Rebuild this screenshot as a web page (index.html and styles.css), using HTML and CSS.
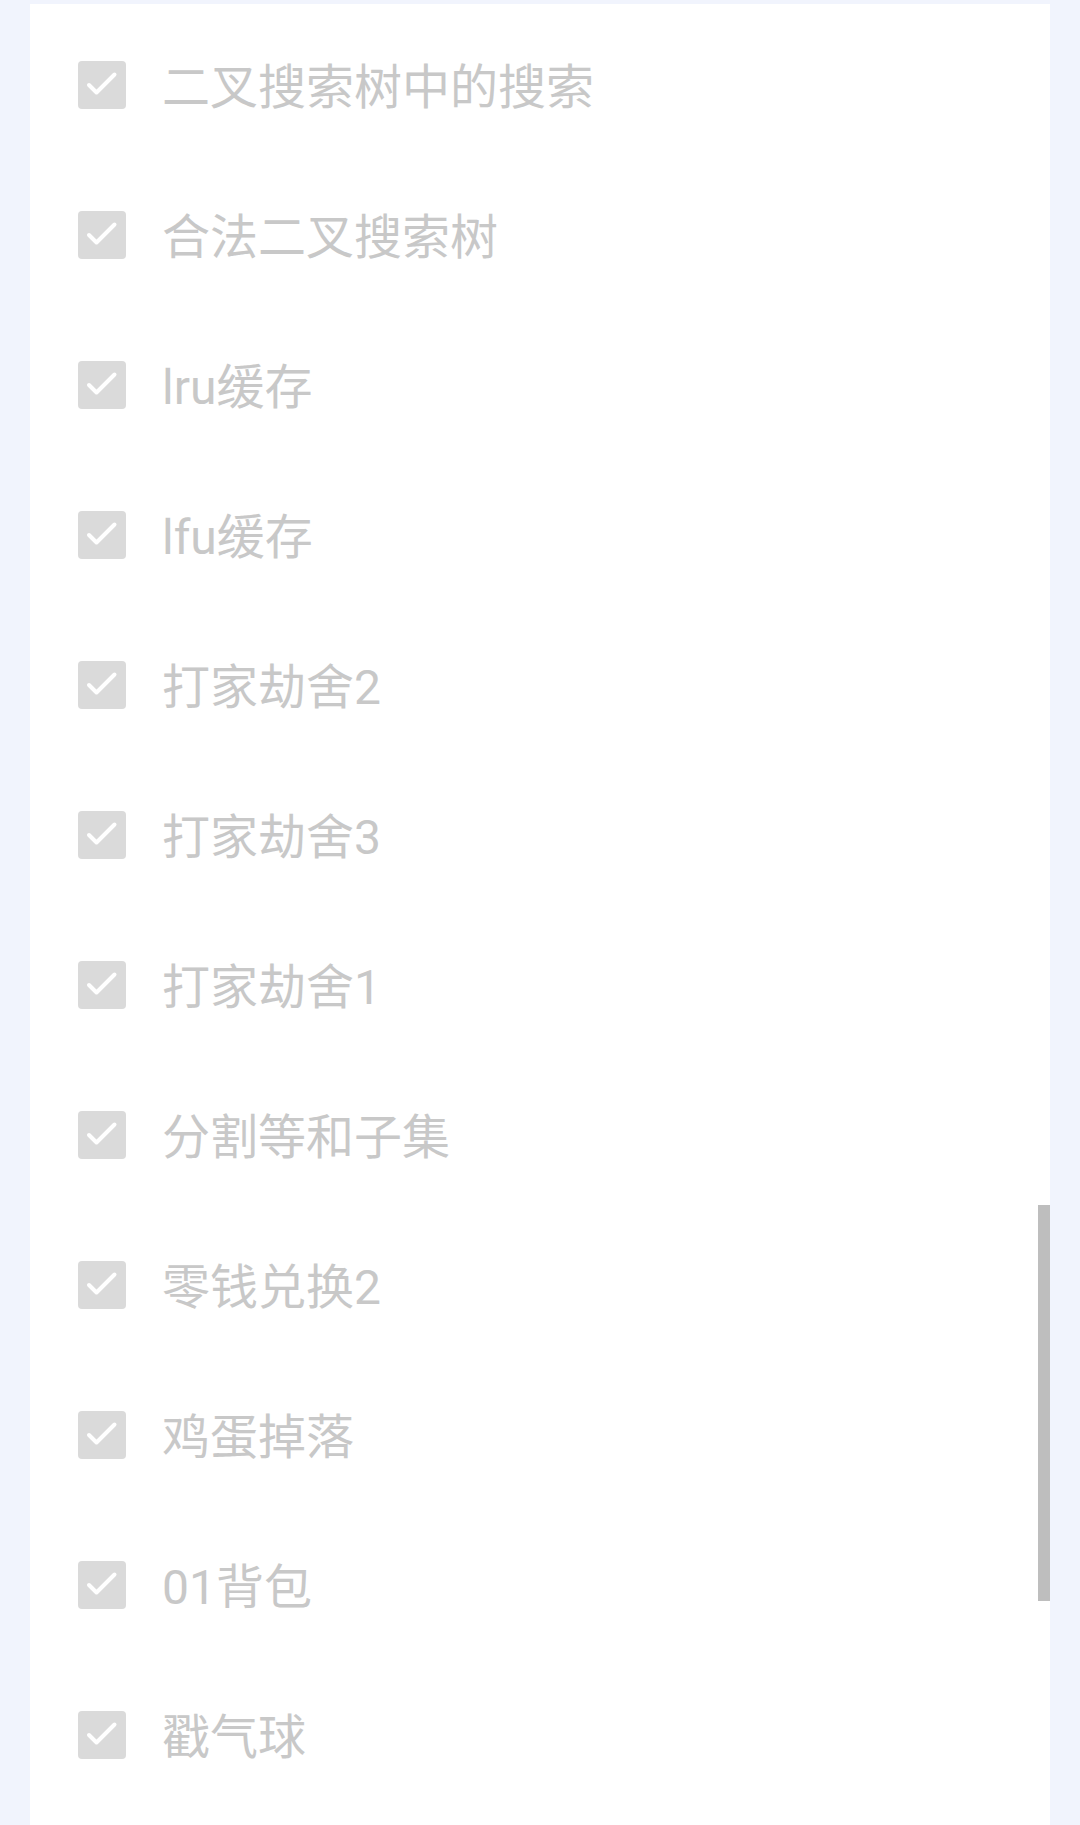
FILE: index.html
```html
<!DOCTYPE html>
<html lang="zh-CN">
<head>
<meta charset="utf-8">
<title>列表</title>
<link rel="stylesheet" href="styles.css">
</head>
<body>
<main class="card">
  <ul class="list">
    <li class="item"><span class="box"><svg viewBox="0 0 48 48"><path d="M11 24 L18.5 31.5 L36.5 13.5"/></svg></span><span class="label">二叉搜索树中的搜索</span></li>
    <li class="item"><span class="box"><svg viewBox="0 0 48 48"><path d="M11 24 L18.5 31.5 L36.5 13.5"/></svg></span><span class="label">合法二叉搜索树</span></li>
    <li class="item"><span class="box"><svg viewBox="0 0 48 48"><path d="M11 24 L18.5 31.5 L36.5 13.5"/></svg></span><span class="label">lru缓存</span></li>
    <li class="item"><span class="box"><svg viewBox="0 0 48 48"><path d="M11 24 L18.5 31.5 L36.5 13.5"/></svg></span><span class="label">lfu缓存</span></li>
    <li class="item"><span class="box"><svg viewBox="0 0 48 48"><path d="M11 24 L18.5 31.5 L36.5 13.5"/></svg></span><span class="label">打家劫舍2</span></li>
    <li class="item"><span class="box"><svg viewBox="0 0 48 48"><path d="M11 24 L18.5 31.5 L36.5 13.5"/></svg></span><span class="label">打家劫舍3</span></li>
    <li class="item"><span class="box"><svg viewBox="0 0 48 48"><path d="M11 24 L18.5 31.5 L36.5 13.5"/></svg></span><span class="label">打家劫舍1</span></li>
    <li class="item"><span class="box"><svg viewBox="0 0 48 48"><path d="M11 24 L18.5 31.5 L36.5 13.5"/></svg></span><span class="label">分割等和子集</span></li>
    <li class="item"><span class="box"><svg viewBox="0 0 48 48"><path d="M11 24 L18.5 31.5 L36.5 13.5"/></svg></span><span class="label">零钱兑换2</span></li>
    <li class="item"><span class="box"><svg viewBox="0 0 48 48"><path d="M11 24 L18.5 31.5 L36.5 13.5"/></svg></span><span class="label">鸡蛋掉落</span></li>
    <li class="item"><span class="box"><svg viewBox="0 0 48 48"><path d="M11 24 L18.5 31.5 L36.5 13.5"/></svg></span><span class="label">01背包</span></li>
    <li class="item"><span class="box"><svg viewBox="0 0 48 48"><path d="M11 24 L18.5 31.5 L36.5 13.5"/></svg></span><span class="label">戳气球</span></li>
  </ul>
  <div class="scrollbar"></div>
</main>
</body>
</html>
```

FILE: styles.css
```css
html, body {
  margin: 0;
  padding: 0;
}
body {
  background: #f1f4fd;
  width: 1080px;
  height: 1825px;
  overflow: hidden;
  font-family: Roboto, "Noto Sans CJK SC", sans-serif;
}
.card {
  position: relative;
  margin: 4px 30px 0 30px;
  width: 1020px;
  height: 1821px;
  background: #ffffff;
  box-sizing: border-box;
  padding: 6px 0 0 48px;
}
.list {
  list-style: none;
  margin: 0;
  padding: 0;
  display: flex;
  flex-direction: column;
}
.item {
  height: 150px;
  display: flex;
  align-items: center;
  gap: 36px;
}
.box {
  width: 48px;
  height: 48px;
  flex: none;
  border-radius: 4px;
  background: #dadada;
  display: block;
}
.box svg {
  display: block;
  width: 48px;
  height: 48px;
  fill: none;
  stroke: #ffffff;
  stroke-width: 4;
  stroke-linecap: round;
  stroke-linejoin: round;
}
.label {
  font-size: 48px;
  line-height: 56px;
  color: #c8c8c8;
  padding-top: 6px;
}
.scrollbar {
  position: absolute;
  right: 0;
  top: 1201px;
  width: 12px;
  height: 396px;
  background: #bebebe;
}
```
